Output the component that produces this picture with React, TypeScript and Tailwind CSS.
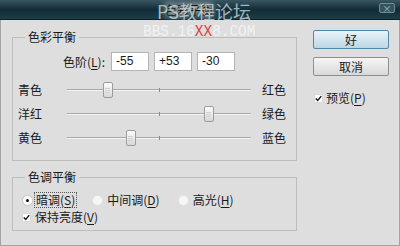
import React from "react";

const font = "font-['Noto_Sans_CJK_SC','Microsoft_YaHei',sans-serif]";

function U({ c }: { c: string }) {
  return <span className="underline underline-offset-2">{c}</span>;
}

function Slider({ left, right, value }: { left: string; right: string; value: number }) {
  const x = 92 + value * 0.935 - 5;
  return (
    <div className="flex items-center h-[24px] pl-[5px]">
      <span className="w-[49px] leading-[14px]">{left}</span>
      <div className="relative w-[184px] h-full">
        <div className="absolute left-0 right-0 top-[11px] h-px bg-[#a8a8a8]" />
        <div className="absolute left-0 right-0 top-[12px] h-px bg-[#f4f4f4]" />
        <div className="absolute left-[92px] top-[10px] w-px h-[4px] bg-[#8a8a8a]" />
        <div
          className="absolute top-[4px] w-[10px] h-[16px] rounded-[2px] border border-[#9c9c9c] bg-gradient-to-b from-[#fbfbfb] via-[#ececec] to-[#d6d6d6] flex flex-col items-center justify-center gap-[1px]"
          style={{ left: x }}
        >
          <div className="w-[5px] h-px bg-[#d0d0d0]" />
          <div className="w-[5px] h-px bg-[#d0d0d0]" />
          <div className="w-[5px] h-px bg-[#d0d0d0]" />
        </div>
      </div>
      <span className="ml-[11px] leading-[14px]">{right}</span>
    </div>
  );
}

function Check() {
  return (
    <div className="w-[9px] h-[9px] bg-white border border-[#d8d8d8] flex items-center justify-center">
      <svg width="9" height="9" viewBox="0 0 9 9">
        <path d="M1 4.5 L3.5 7 L8 1.5" fill="none" stroke="#111" strokeWidth="1.8" />
      </svg>
    </div>
  );
}

function Radio({ on }: { on?: boolean }) {
  return (
    <div
      className={
        "w-[11px] h-[11px] rounded-full flex items-center justify-center " +
        (on ? "bg-white border border-[#c4c4c4]" : "bg-[#f6f6f6] border border-[#e2e2e2]")
      }
    >
      {on && <div className="w-[3px] h-[3px] rounded-full bg-[#111]" />}
    </div>
  );
}

export default function App() {
  const inputs = ["-55", "+53", "-30"];
  return (
    <div className={`relative w-[400px] h-[246px] overflow-hidden bg-[#dedede] text-[12px] text-[#1a1a1a] ${font}`}>
      {/* title bar */}
      <div className="h-[20px] flex items-center bg-gradient-to-b from-[#3a5663] via-[#122d37] to-[#1e3d47] border-b border-[#0c2028]">
        <span className="ml-[165px] leading-[14px] text-[#1a1a1a] [text-shadow:0_0_6px_#ffffff,0_0_10px_#ffffff]">
          色彩平衡
        </span>
        <div className="ml-auto mr-[5px] -mt-[3px] w-[16px] h-[10px] rounded-[2px] border border-[#6f8d97] bg-[#35545e] flex items-center justify-center text-[9px] leading-none text-[#a9c0c7]">
          ×
        </div>
      </div>

      <div className="flex h-[226px] border-l border-r border-b border-[#a3a3a3]">
        {/* left column */}
        <div className="pl-[11px] pt-[10px] w-[296px]">
          <fieldset className="border border-[#bdbdbd] pb-[10px]">
            <legend className="ml-[12px] px-[3px] leading-[14px]">色彩平衡</legend>
            <div className="flex items-center h-[19px] mt-[8px] pl-[50px]">
              <span className="w-[48px] leading-[14px]">
                色阶(<U c="L" />):
              </span>
              <div className="flex gap-[5px]">
                {inputs.map((v) => (
                  <div
                    key={v}
                    className="w-[38px] h-[19px] bg-white border border-[#b4b4b4] pl-[4px] leading-[17px] font-['Liberation_Sans',sans-serif] text-[12px]"
                  >
                    {v}
                  </div>
                ))}
              </div>
            </div>
            <div className="mt-[7px]">
              <Slider left="青色" right="红色" value={-55} />
              <Slider left="洋红" right="绿色" value={53} />
              <Slider left="黄色" right="蓝色" value={-30} />
            </div>
          </fieldset>

          <fieldset className="mt-[9px] border border-[#bdbdbd] pb-[5px]">
            <legend className="ml-[12px] px-[3px] leading-[14px]">色调平衡</legend>
            <div className="flex items-center h-[16px] mt-[8px] pl-[9px]">
              <Radio on />
              <span className="ml-[2px] px-[1px] leading-[14px] outline-1 outline-dotted outline-[#555]">
                暗调(<U c="S" />)
              </span>
              <div className="ml-[16px]">
                <Radio />
              </div>
              <span className="ml-[4px] leading-[14px]">
                中间调(<U c="D" />)
              </span>
              <div className="ml-[18px]">
                <Radio />
              </div>
              <span className="ml-[4px] leading-[14px]">
                高光(<U c="H" />)
              </span>
            </div>
            <div className="flex items-center h-[16px] mt-[1px] pl-[9px]">
              <Check />
              <span className="ml-[4px] leading-[14px]">
                保持亮度(<U c="V" />)
              </span>
            </div>
          </fieldset>
        </div>

        {/* right column */}
        <div className="ml-[16px] pt-[10px] w-[76px]">
          <button className="w-[76px] h-[19px] rounded-[2px] border border-[#4f8aa6] bg-gradient-to-b from-[#e9f4f9] to-[#bcd7e4] leading-[14px]">
            好
          </button>
          <button className="mt-[8px] w-[76px] h-[19px] rounded-[2px] border border-[#8e8e8e] bg-gradient-to-b from-[#f5f5f5] to-[#d9d9d9] leading-[14px]">
            取消
          </button>
          <div className="flex items-center h-[16px] mt-[14px] pl-[1px]">
            <Check />
            <span className="ml-[3px] leading-[14px]">
              预览(<U c="P" />)
            </span>
          </div>
        </div>
      </div>

      {/* forum watermark */}
      <span className="absolute left-[157px] top-[0px] text-[18px] leading-[22px] text-[#cfe0e6]/75 pointer-events-none">
        PS教程论坛
      </span>
      <span className="absolute left-[143px] top-[25px] origin-left scale-x-[0.9] font-['Liberation_Mono',monospace] text-[16px] leading-[14px] text-[#f2f2f2] pointer-events-none">
        BBS.16<span className="text-[#e23a3a]">XX</span>8.COM
      </span>
    </div>
  );
}
